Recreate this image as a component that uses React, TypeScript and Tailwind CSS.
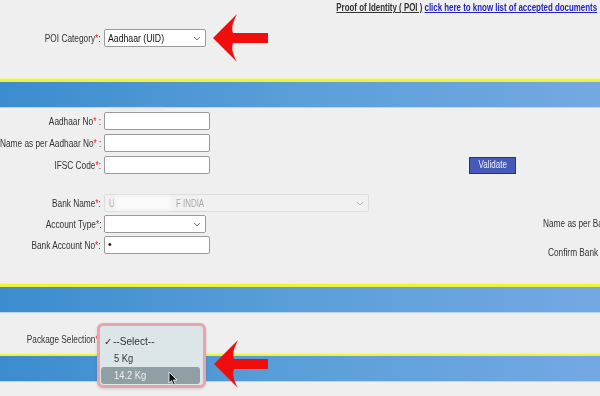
import React from 'react'

const Req = () => <span className="text-[#e0202a]">*</span>

// the screenshot is squeezed horizontally, so text runs narrow
function Sq({ children, from = 'left' }: { children: React.ReactNode; from?: 'left' | 'right' }) {
  return (
    <span className={`inline-block shrink-0 whitespace-nowrap scale-x-[0.79] ${from === 'right' ? 'origin-right' : 'origin-left'}`}>
      {children}
    </span>
  )
}

function Label({ children, className = '' }: { children: React.ReactNode; className?: string }) {
  return (
    <div className={`flex w-[101px] shrink-0 justify-end whitespace-nowrap text-[10.5px] leading-[18px] text-[#333] ${className}`}>
      <Sq from="right">{children}</Sq>
    </div>
  )
}

function TextInput({ value = '', w = 'w-[106px]' }: { value?: string; w?: string }) {
  return (
    <div className={`${w} h-[18px] shrink-0 rounded-[2px] border border-[#9a9a9a] bg-white px-[3px] text-[10px] leading-[16px] text-[#111]`}>
      {value}
    </div>
  )
}

function Chevron({ color = '#777' }: { color?: string }) {
  return (
    <svg width="8" height="5" viewBox="0 0 8 5" className="shrink-0">
      <path d="M1 1l3 3 3-3" fill="none" stroke={color} strokeWidth="1" />
    </svg>
  )
}

function Select({ value = '', w = 'w-[102px]' }: { value?: string; w?: string }) {
  return (
    <div className={`${w} flex h-[18px] shrink-0 items-center justify-between rounded-[2px] border border-[#9a9a9a] bg-white pl-[3px] pr-[4px] text-[11px] text-[#111]`}>
      <span className="leading-none">
        <Sq>{value}</Sq>
      </span>
      <Chevron />
    </div>
  )
}

function Band({ top = 'border-t-[3px]' }: { top?: string }) {
  return (
    <div className={`${top} border-[#eef23c] shadow-[0_-1px_1px_#f4f7a0]`}>
      <div className="h-[26px] border-b border-[#bcd3ee] bg-gradient-to-r from-[#3b8cce] via-[#5a9fd9] to-[#74a8e3]" />
    </div>
  )
}

export default function App() {
  return (
    <div className="relative h-[396px] w-[600px] overflow-hidden bg-[#efefef] font-['Liberation_Sans',Arial,sans-serif]">
      {/* POI header */}
      <div className="flex h-[79px] flex-col pt-[1px]">
        <div className="flex h-[13px] justify-end whitespace-nowrap pr-[3px] text-[10px] font-bold leading-[13px]">
          <Sq from="right">
            <span className="text-[#333] underline">Proof of Identity ( POI )</span>{' '}
            <span className="text-[#2222c4] underline">click here to know list of accepted documents</span>
          </Sq>
        </div>
        <div className="mt-[15px] flex items-center gap-[3px]">
          <Label>
            POI Category<Req />:
          </Label>
          <Select value="Aadhaar (UID)" />
        </div>
      </div>

      <Band />
      <div className="mx-[110px] h-[1px] w-[55px] bg-[#d9dde2] blur-[1px]" />

      {/* Aadhaar / bank details */}
      <div className="flex h-[175px] flex-col pt-[3px]">
        <div className="flex flex-col gap-[4px]">
          <div className="flex items-center gap-[3px]">
            <Label>
              Aadhaar No<Req /> :
            </Label>
            <TextInput />
          </div>
          <div className="flex items-center gap-[3px]">
            <Label>
              Name as per Aadhaar No<Req /> :
            </Label>
            <TextInput />
          </div>
          <div className="flex items-center gap-[3px]">
            <Label>
              IFSC Code<Req />:
            </Label>
            <TextInput />
            <button className="ml-[256px] flex h-[17px] w-[47px] items-center justify-center border border-[#2a3470] bg-[#4559b9] text-[10px] leading-none text-[#eef0ff]">
              <span className="inline-block scale-x-[0.8]">Validate</span>
            </button>
          </div>
        </div>

        <div className="mt-[20px] flex flex-col gap-[3px]">
          <div className="flex items-center gap-[3px]">
            <Label>
              Bank Name<Req />:
            </Label>
            <div className="flex h-[18px] w-[265px] items-center justify-between rounded-[2px] border border-[#dddddd] bg-[#f1f1f1] pl-[4px] pr-[4px] text-[10px] text-[#a8a8a8]">
              <span className="flex items-center">
                <Sq>U</Sq>
                <span className="ml-[-1px] mr-[5px] h-[14px] w-[56px] bg-[#fafafa] blur-[2px]" />
                <Sq>F INDIA</Sq>
              </span>
              <Chevron color="#b5b5b5" />
            </div>
          </div>
          <div className="flex items-center gap-[3px]">
            <Label>
              Account Type<Req />:
            </Label>
            <Select />
            <div className="ml-[334px] whitespace-nowrap text-[10.5px] text-[#333]">
              <Sq>
                Name as per Bank Account<Req />:
              </Sq>
            </div>
          </div>
          <div className="flex items-start gap-[3px]">
            <Label>
              Bank Account No<Req />:
            </Label>
            <TextInput value="•" />
            <div className="ml-[335px] mt-[9px] whitespace-nowrap text-[10.5px] text-[#333]">
              <Sq>
                Confirm Bank Account No<Req />:
              </Sq>
            </div>
          </div>
        </div>
      </div>

      <Band />

      {/* Package */}
      <div className="flex h-[41px] items-start gap-[3px] pt-[17px]">
        <Label>
          Package Selection<Req />:
        </Label>
        <Select />
      </div>

      <Band top="border-t-[2px]" />

      {/* open dropdown */}
      <div className="absolute left-[97px] top-[323px] h-[65px] w-[109px] rounded-[6px] border-[3px] border-[#e8a3ab] bg-[#dce6e8] pt-[7px] text-[11px] text-[#333] shadow-[0_1px_3px_rgba(0,0,0,0.15)]">
        <div className="flex h-[17px] items-center pl-[4px]">
          <span className="w-[9px] text-[10px]">✓</span>
          <span className="inline-block origin-left scale-x-[0.92]">--Select--</span>
        </div>
        <div className="flex h-[17px] items-center pl-[14px]">
          <span className="inline-block origin-left scale-x-[0.85]">5 Kg</span>
        </div>
        <div className="mx-[1px] mr-[3px] flex h-[17px] items-center rounded-[3px] bg-[#909fa4] pl-[13px] text-[#eef2f3]">
          <span className="inline-block origin-left scale-x-[0.85]">14.2 Kg</span>
        </div>
      </div>

      {/* annotation arrows + cursor */}
      <svg className="pointer-events-none absolute inset-0" width="600" height="396" viewBox="0 0 600 396">
        <path d="M213 38 L237 14 C233 22 231 28 233 33 L268 33 L268 43 L233 43 C231 49 233 55 237 62 Z" fill="#f20d0d" />
        <path d="M214 364 L238 340 C234 348 232 354 234 359 L268 359 L268 369 L234 369 C232 375 234 381 238 388 Z" fill="#f20d0d" />
        <path d="M169 372 L169 383 L171.6 380.6 L173.5 385 L175.3 384.2 L173.5 380 L177 380 Z" fill="#111" stroke="#fff" strokeWidth="0.8" />
      </svg>
    </div>
  )
}
